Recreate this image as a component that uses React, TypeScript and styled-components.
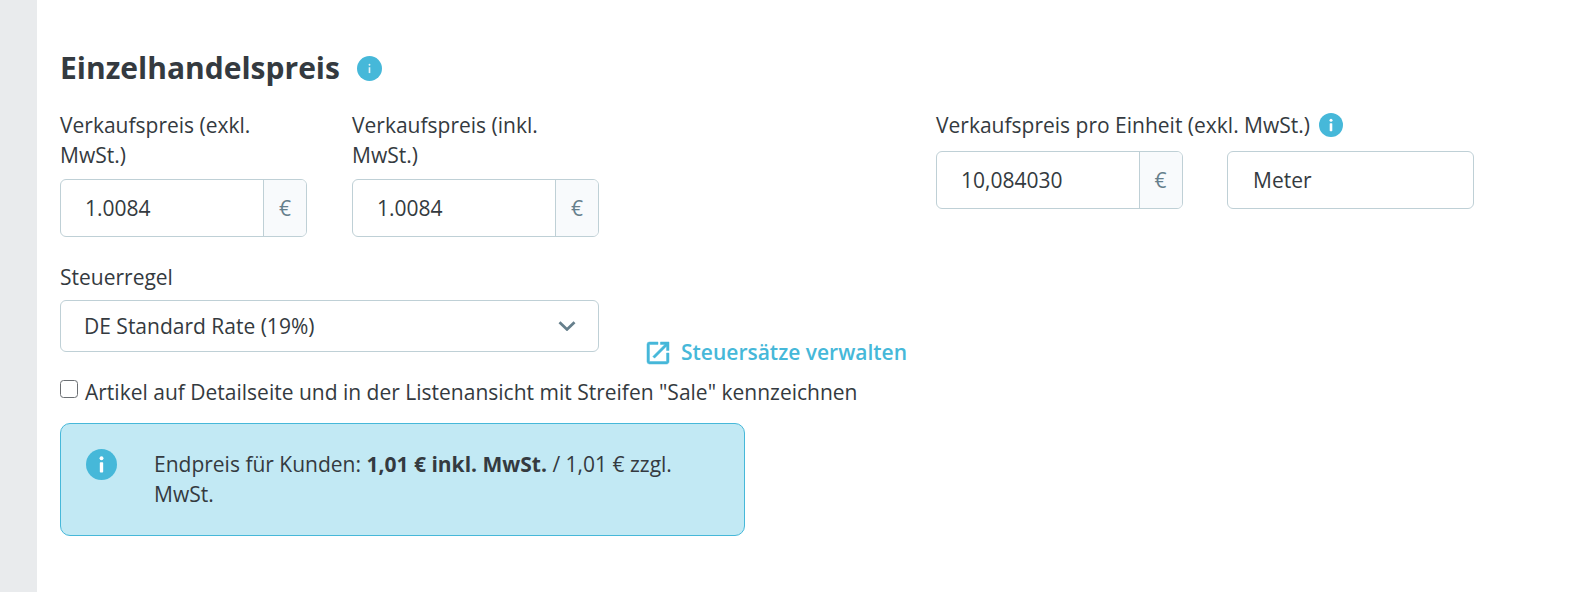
import React from 'react'
import styled, { createGlobalStyle } from 'styled-components'

const GlobalStyle = createGlobalStyle`
  html, body {
    margin: 0;
    background: #fff;
  }
  body {
    font-family: 'Open Sans', 'Noto Sans', sans-serif;
    font-size: 21px;
    line-height: 30px;
    color: #343a40;
  }
`

const Page = styled.div`
  display: flex;
  height: 592px;
  overflow: hidden;
`

const SideBand = styled.div`
  width: 37px;
  flex: none;
  background: #e9ebed;
`

const Main = styled.div`
  flex: 1;
  padding: 47px 0 0 23px;
`

const TitleRow = styled.div`
  display: flex;
  align-items: center;
  gap: 17px;
  height: 42px;
  margin-bottom: 21px;
`

const Title = styled.h2`
  margin: 0;
  font-size: 30px;
  line-height: 42px;
  font-weight: 700;
`

const FieldGrid = styled.div`
  display: grid;
  grid-template-columns: repeat(5, 247px);
  column-gap: 45px;
  align-items: start;
`

const UnitGrid = styled.div`
  display: grid;
  grid-template-columns: 246.5px 246.5px;
  column-gap: 44.5px;
`

const Field = styled.div<{ $span?: number }>`
  grid-column: span ${p => p.$span ?? 1};
`

const Spacer = styled.div``

const Label = styled.label<{ $gap?: number }>`
  display: flex;
  align-items: center;
  gap: 9px;
  margin-bottom: ${p => p.$gap ?? 9}px;
`

const InputGroup = styled.div`
  display: flex;
  height: 58px;
  box-sizing: border-box;
  border: 1px solid #bfd0d6;
  border-radius: 6px;
  overflow: hidden;
  background: #fff;
`

const Value = styled.div<{ $indent?: number }>`
  flex: 1;
  display: flex;
  align-items: center;
  padding-left: ${p => p.$indent ?? 24}px;
`

const Addon = styled.div`
  width: 42px;
  display: flex;
  align-items: center;
  justify-content: center;
  border-left: 1px solid #bfd0d6;
  background: #f8fafc;
  color: #667f8c;
`

const TaxRow = styled.div`
  display: grid;
  grid-template-columns: 539px auto;
  column-gap: 48px;
  margin-top: 25px;
  align-items: end;
`

const Select = styled.div`
  display: flex;
  align-items: center;
  justify-content: space-between;
  height: 52px;
  box-sizing: border-box;
  border: 1px solid #bfd0d6;
  border-radius: 6px;
  padding: 0 22px 0 23px;
`

const ManageLink = styled.a`
  display: flex;
  align-items: center;
  gap: 12px;
  height: 28px;
  margin-bottom: -14px;
  font-weight: 600;
  color: #46b8d9;
  text-decoration: none;
  white-space: nowrap;
`

const LinkIcon = styled.svg`
  flex: none;
  margin-top: 2px;
  overflow: visible;
`

const CheckRow = styled.label`
  display: flex;
  align-items: center;
  gap: 7px;
  margin-top: 26px;
  height: 28px;
`

const CheckBox = styled.span`
  flex: none;
  width: 18px;
  height: 18px;
  box-sizing: border-box;
  border: 1.5px solid #6b6f73;
  border-radius: 3.5px;
  background: #fff;
  margin-top: -6px;
`

const Notice = styled.div`
  display: flex;
  box-sizing: border-box;
  width: 685px;
  height: 113px;
  margin-top: 17px;
  padding: 25px 24px 0 25px;
  border: 1px solid #46b8d9;
  border-radius: 10px;
  background: #c2e9f4;
`

const NoticeText = styled.div`
  margin-left: 37px;
`

// the heading icon has a thinner, fainter "i" than the others
const InfoIcon: React.FC<{ size: number; thin?: boolean }> = ({ size, thin }) => (
  <svg width={size} height={size} viewBox="0 0 24 24" style={{ flex: 'none' }}>
    <circle cx="12" cy="12" r="12" fill="#46b8d9" />
    {thin ? (
      <g fill="#fff" opacity="0.85">
        <circle cx="12" cy="8.4" r="0.9" />
        <rect x="11.2" y="10.8" width="1.6" height="5.6" />
      </g>
    ) : (
      <g fill="#fff">
        <circle cx="12" cy="7.2" r="1.5" />
        <rect x="10.7" y="10.2" width="2.6" height="8" rx="0.6" />
      </g>
    )}
  </svg>
)

const App: React.FC = () => (
  <Page>
    <GlobalStyle />
    <SideBand />
    <Main>
      <TitleRow>
        <Title>Einzelhandelspreis</Title>
        <InfoIcon size={25} thin />
      </TitleRow>
      <FieldGrid>
        <Field>
          <Label>Verkaufspreis (exkl. MwSt.)</Label>
          <InputGroup>
            <Value>1.0084</Value>
            <Addon>€</Addon>
          </InputGroup>
        </Field>
        <Field>
          <Label>Verkaufspreis (inkl. MwSt.)</Label>
          <InputGroup>
            <Value>1.0084</Value>
            <Addon>€</Addon>
          </InputGroup>
        </Field>
        <Spacer />
        <Field $span={2}>
          <Label $gap={11}>
            Verkaufspreis pro Einheit (exkl. MwSt.)
            <InfoIcon size={24} />
          </Label>
          <UnitGrid>
            <InputGroup>
              <Value>10,084030</Value>
              <Addon>€</Addon>
            </InputGroup>
            <InputGroup>
              <Value $indent={25}>Meter</Value>
            </InputGroup>
          </UnitGrid>
        </Field>
      </FieldGrid>
      <TaxRow>
        <div>
          <Label $gap={8}>Steuerregel</Label>
          <Select>
            DE Standard Rate (19%)
            <svg width="18" height="10" viewBox="0 0 18 10" fill="none">
              <path d="M1.5 1.2L9 8.4l7.5-7.2" stroke="#667f8c" strokeWidth="2.8" />
            </svg>
          </Select>
        </div>
        <ManageLink href="#">
          <LinkIcon width="22" height="22" viewBox="3 3 18 18" fill="#46b8d9" stroke="#46b8d9" strokeWidth="0.4">
            <path d="M19 19H5V5h7V3H5a2 2 0 0 0-2 2v14a2 2 0 0 0 2 2h14c1.1 0 2-.9 2-2v-7h-2v7zM14 3v2h3.59l-9.83 9.83 1.41 1.41L19 6.41V10h2V3h-7z" />
          </LinkIcon>
          Steuersätze verwalten
        </ManageLink>
      </TaxRow>
      <CheckRow>
        <CheckBox />
        Artikel auf Detailseite und in der Listenansicht mit Streifen "Sale" kennzeichnen
      </CheckRow>
      <Notice>
        <InfoIcon size={31} />
        <NoticeText>
          Endpreis für Kunden: <b>1,01 € inkl. MwSt.</b> / 1,01 € zzgl. MwSt.
        </NoticeText>
      </Notice>
    </Main>
  </Page>
)

export default App
